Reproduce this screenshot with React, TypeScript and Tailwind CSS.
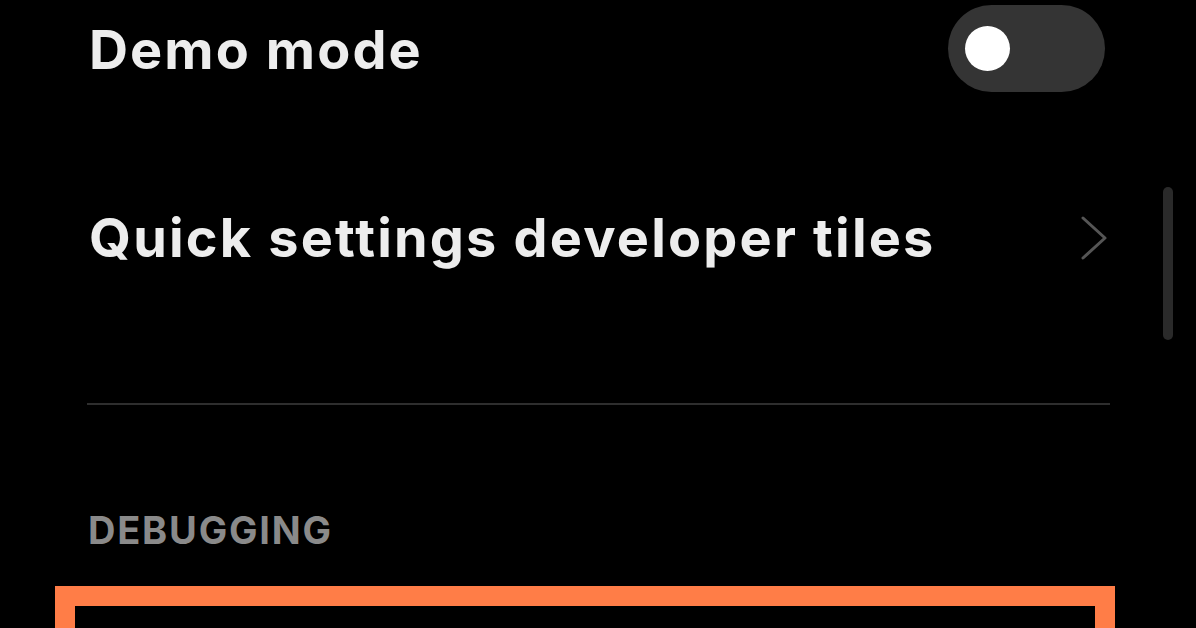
import React from "react";

export default function App() {
  const font = { fontFamily: "Inter, 'Noto Sans', sans-serif" };
  return (
    <div className="relative w-[1196px] h-[628px] bg-black overflow-hidden" style={font}>
      <div className="flex flex-col">
        <div className="flex items-center justify-between h-[100px] pl-[89px] pr-[91px]">
          <span className="text-[54px] leading-none font-bold text-[#ededed] tracking-[2.1px]">Demo mode</span>
          <div className="w-[157px] h-[87px] -mt-[4px] rounded-full bg-[#343434] flex items-center pl-[17px]">
            <div className="w-[45px] h-[45px] rounded-full bg-white" />
          </div>
        </div>
        <div className="flex items-center justify-between h-[180px] mt-[48px] pl-[89px] pr-[88px]">
          <span className="text-[54px] leading-none font-bold text-[#ededed] tracking-[2.2px]">Quick settings developer tiles</span>
          <svg width="28" height="44" viewBox="0 0 28 44" fill="none">
            <path d="M3 2 L25 22 L3 42" stroke="#555555" strokeWidth="3" strokeLinecap="round" strokeLinejoin="round" />
          </svg>
        </div>
        <div className="mt-[75px] ml-[87px] mr-[86px] h-[2px] bg-[#2e2e2e]" />
        <div className="mt-[106px] pl-[88px] text-[38px] leading-none font-bold text-[#8a8a8a] tracking-[1.8px]">DEBUGGING</div>
        <div className="mt-[37px] ml-[55px] mr-[81px] h-[80px] border-[20px] border-[#ff7d47] bg-black" />
      </div>
      <div className="absolute left-[1163px] top-[187px] w-[10px] h-[153px] rounded-full bg-[#2a2a2a]" />
    </div>
  );
}
